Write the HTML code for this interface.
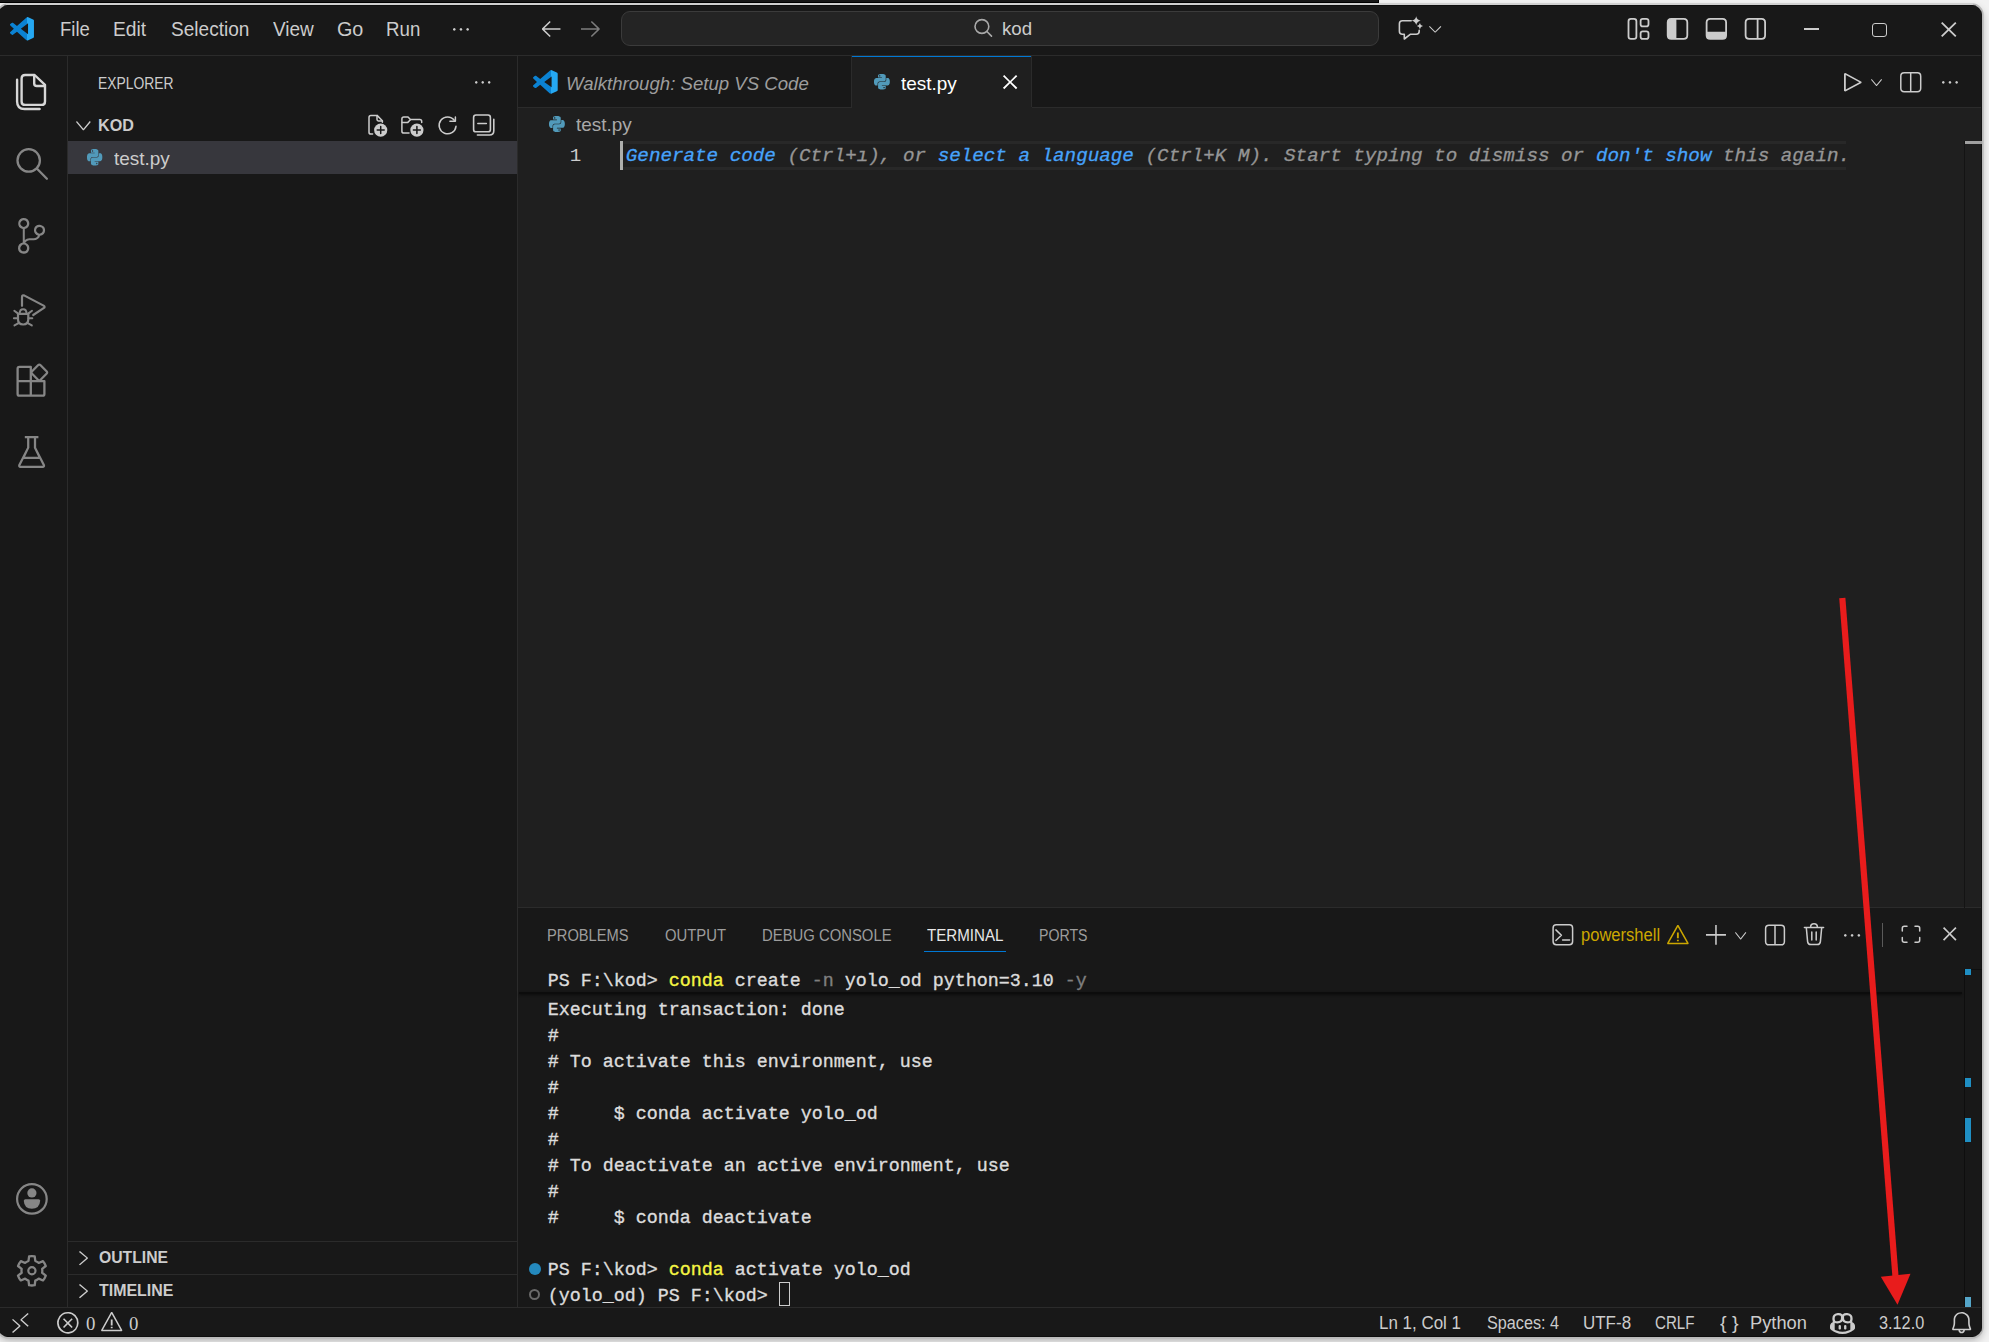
<!DOCTYPE html>
<html><head><meta charset="utf-8"><title>test.py - kod - Visual Studio Code</title>
<style>
html,body{margin:0;padding:0}
body{width:1989px;height:1342px;position:relative;overflow:hidden;background:#f2f2f2;font-family:'Liberation Sans', sans-serif;-webkit-font-smoothing:antialiased}
#win{position:absolute;left:-2px;top:5px;width:1984px;height:1332px;border-radius:10px;overflow:hidden;box-shadow:0 0 0 1.7px #bababa,0 3px 8px 0 rgba(0,0,0,.30)}
#in{position:absolute;left:2px;top:-5px;width:1989px;height:1342px}
</style></head><body>
<div style="position:absolute;left:0;top:0;width:1379px;height:3px;background:#181818;border-bottom:1px solid #000;border-right:1px solid #000;box-sizing:border-box"></div>
<div id="win"><div id="in">
<div style="position:absolute;left:0px;top:0px;width:1989px;height:1342px;background:#181818;"></div>
<div style="position:absolute;left:518px;top:108px;width:1464px;height:800px;background:#1f1f1f;"></div>
<div style="position:absolute;left:0px;top:55px;width:1989px;height:1px;background:#2b2b2b;"></div>
<div style="position:absolute;left:67px;top:56px;width:1px;height:1252px;background:#2b2b2b;"></div>
<div style="position:absolute;left:517px;top:56px;width:1px;height:1252px;background:#2b2b2b;"></div>
<div style="position:absolute;left:518px;top:107px;width:1464px;height:1px;background:#2b2b2b;"></div>
<div style="position:absolute;left:518px;top:907px;width:1464px;height:1px;background:#2b2b2b;"></div>
<div style="position:absolute;left:0px;top:1307px;width:1989px;height:1px;background:#2b2b2b;"></div>
<div style="position:absolute;left:0px;top:1336px;width:1989px;height:1px;background:#0e0e0e;"></div>
<div style="position:absolute;left:1981px;top:5px;width:1px;height:1332px;background:#141414;"></div>
<div style="position:absolute;left:0px;top:5px;width:1989px;height:1px;background:#0e0e0e;"></div>
<svg style="position:absolute;left:0;top:0" width="0" height="0"><defs><linearGradient id="vg" x1="0" x2="1" y1="0" y2="0"><stop offset="0.72" stop-color="#0b82d2"/><stop offset="0.72" stop-color="#25a8f2"/></linearGradient></defs></svg>
<svg style="position:absolute;left:10.00px;top:17.00px;overflow:visible" width="24.00" height="23.50" viewBox="1.0133333333333334 0.9813333333333318 13.013333333333334 13.018666666666668" preserveAspectRatio="none"><path fill="url(#vg)" d="M10.9 13.9Q10.6 14.1 10.2 13.9Q10.1 13.9 9.9 13.8L4.8 9.1L2.6 10.8Q2.5 10.9 2.2 10.9Q2 10.9 1.9 10.7L1.2 10.1Q1 9.9 1 9.7Q1 9.4 1.2 9.3L3.1 7.5L1.2 5.7Q1 5.5 1 5.3Q1 5.1 1.2 4.9L1.9 4.3Q2 4.1 2.2 4.1Q2.5 4.1 2.6 4.2L4.8 5.9L10 1.2Q10.2 1 10.5 1Q10.7 1 10.9 1.1L13.5 2.4Q13.8 2.5 13.9 2.7Q14 2.9 14 3.1V8H10.8V4.5L6.9 7.5L10.8 10.5V8H14V11.9Q14 12.1 13.9 12.3Q13.8 12.5 13.5 12.6Z"/></svg>
<svg style="position:absolute;left:453.00px;top:27.70px;overflow:visible" width="16.00" height="2.80" viewBox="2.026666666666667 6.986666666666666 12.0 2.026666666666667" preserveAspectRatio="none"><path fill="#cccccc" d="M4 8Q4 8.4 3.7 8.7Q3.4 9 3 9Q2.6 9 2.3 8.7Q2 8.4 2 8Q2 7.6 2.3 7.3Q2.6 7 3 7Q3.4 7 3.7 7.3Q4 7.6 4 8ZM9 8Q9 8.4 8.7 8.7Q8.4 9 8 9Q7.6 9 7.3 8.7Q7 8.4 7 8Q7 7.6 7.3 7.3Q7.6 7 8 7Q8.4 7 8.7 7.3Q9 7.6 9 8ZM14 8Q14 8.4 13.7 8.7Q13.4 9 13 9Q12.6 9 12.3 8.7Q12 8.4 12 8Q12 7.6 12.3 7.3Q12.6 7 13 7Q13.4 7 13.7 7.3Q14 7.6 14 8Z"/></svg>
<svg style="position:absolute;left:541.50px;top:21.00px;overflow:visible" width="18.50" height="16.00" viewBox="2.026666666666667 3.0933333333333337 12.0 10.72" preserveAspectRatio="none"><path fill="#cccccc" d="M7 3.1 2 8.1V8.8L7 13.8L7.7 13.1L3.6 9H14V7.9H3.6L7.7 3.8Z"/></svg>
<svg style="position:absolute;left:580.75px;top:21.00px;overflow:visible" width="18.75" height="16.00" viewBox="2.026666666666667 3.1999999999999993 12.0 10.666666666666666" preserveAspectRatio="none"><path fill="#7d7d7d" d="M9 13.9 14 8.9V8.2L9 3.2L8.3 3.9L12.4 8.1H2V9H12.4L8.3 13.2Z"/></svg>
<div style="position:absolute;left:621px;top:11px;width:758px;height:35px;background:#242424;border:1px solid #3b3b3b;border-radius:9px;box-sizing:border-box"></div>
<svg style="position:absolute;left:1428.80px;top:26.00px;overflow:visible" width="12.30" height="6.60" viewBox="2.986666666666667 5.706666666666667 9.973333333333333 5.28" preserveAspectRatio="none"><path fill="#cccccc" d="M8 10.1 12.3 5.7 13 6.3 8.3 11H7.7L3 6.3L3.6 5.7Z"/></svg>
<div style="position:absolute;left:1803.5px;top:28.3px;width:15px;height:1.5px;background:#cccccc;"></div>
<div style="position:absolute;left:1872px;top:22.5px;width:15px;height:14.5px;background:transparent;border:1.8px solid #cccccc;border-radius:3px;box-sizing:border-box"></div>
<svg style="position:absolute;left:1941.00px;top:22.00px;overflow:visible" width="15.50" height="15.00" viewBox="2.56 2.5600000000000005 10.88 10.88" preserveAspectRatio="none"><path fill="#cccccc" d="M7.1 8 2.6 12.5 3.5 13.4 8 8.9 12.5 13.4 13.4 12.5 8.9 8 13.4 3.5 12.5 2.6 8 7.1 3.5 2.6 2.6 3.5Z"/></svg>
<svg style="position:absolute;left:18.40px;top:218.10px;overflow:visible" width="27.20" height="35.80" viewBox="1.9904 0.0 12.036266666666666 16.004444444444445" preserveAspectRatio="none"><path fill="#868686" d="M14 5.5Q14 4.8 13.7 4.2Q13.3 3.6 12.6 3.3Q12 2.9 11.3 3Q10.6 3 10 3.5Q9.4 3.9 9.2 4.6Q9 5.2 9.1 5.9Q9.2 6.6 9.7 7.1Q10.1 7.6 10.8 7.8Q10.6 8.4 10.1 8.7Q9.6 9 9 9H7Q5.9 9 5 9.8V4.9Q6 4.7 6.5 4Q7.1 3.2 7 2.2Q6.9 1.3 6.2 0.6Q5.5 0 4.5 0Q3.6 0 2.9 0.6Q2.1 1.3 2.1 2.2Q2 3.2 2.5 4Q3.1 4.7 4.1 4.9V11Q3.1 11.2 2.5 11.9Q1.9 12.7 2 13.7Q2.1 14.6 2.7 15.3Q3.4 15.9 4.4 16Q5.3 16.1 6.1 15.5Q6.8 14.9 7 13.9Q7.1 13 6.7 12.2Q6.2 11.4 5.2 11.1Q5.5 10.6 6 10.3Q6.5 10 7 10H9Q10 10 10.7 9.4Q11.5 8.9 11.8 7.9Q12.7 7.8 13.4 7.1Q14 6.4 14 5.5ZM3 2.5Q3 1.9 3.5 1.4Q3.9 1 4.5 1Q5.2 1 5.6 1.4Q6 1.9 6 2.5Q6 3.1 5.6 3.5Q5.2 4 4.5 4Q3.9 4 3.5 3.5Q3 3.1 3 2.5ZM6 13.4Q6 14.1 5.6 14.5Q5.2 14.9 4.5 14.9Q3.9 14.9 3.5 14.5Q3 14.1 3 13.5Q3 12.9 3.5 12.4Q3.9 11.9 4.5 11.9Q5.2 11.9 5.6 12.4Q6 12.9 6 13.4ZM11.5 7Q10.9 7 10.5 6.5Q10 6.1 10 5.5Q10 4.9 10.5 4.4Q10.9 4 11.5 4Q12.1 4 12.6 4.4Q13 4.9 13 5.5Q13 6.1 12.6 6.5Q12.1 7 11.5 7Z"/></svg>
<svg style="position:absolute;left:18.40px;top:435.90px;overflow:visible" width="27.20" height="32.10" viewBox="1.9901754385964914 1.0133333333333336 12.003475355054304 13.973333333333333" preserveAspectRatio="none"><path fill="#868686" d="M13.9 13.5 10 6V2H11V1H5V2H6V6L2.1 13.5Q1.9 14.1 2.2 14.5Q2.5 15 3 15H13Q13.5 15 13.8 14.5Q14.1 14.1 13.9 13.5ZM6.9 6.4 7 6.2V2H9V6.2L10.9 10H5.1ZM3 14 4.5 11H11.5L13 14Z"/></svg>
<svg style="position:absolute;left:475.00px;top:80.70px;overflow:visible" width="15.50" height="2.70" viewBox="2.026666666666667 6.986666666666666 12.0 2.026666666666667" preserveAspectRatio="none"><path fill="#cccccc" d="M4 8Q4 8.4 3.7 8.7Q3.4 9 3 9Q2.6 9 2.3 8.7Q2 8.4 2 8Q2 7.6 2.3 7.3Q2.6 7 3 7Q3.4 7 3.7 7.3Q4 7.6 4 8ZM9 8Q9 8.4 8.7 8.7Q8.4 9 8 9Q7.6 9 7.3 8.7Q7 8.4 7 8Q7 7.6 7.3 7.3Q7.6 7 8 7Q8.4 7 8.7 7.3Q9 7.6 9 8ZM14 8Q14 8.4 13.7 8.7Q13.4 9 13 9Q12.6 9 12.3 8.7Q12 8.4 12 8Q12 7.6 12.3 7.3Q12.6 7 13 7Q13.4 7 13.7 7.3Q14 7.6 14 8Z"/></svg>
<svg style="position:absolute;left:75.75px;top:120.75px;overflow:visible" width="14.75" height="9.25" viewBox="2.986666666666667 5.706666666666667 9.973333333333333 5.28" preserveAspectRatio="none"><path fill="#cccccc" d="M8 10.1 12.3 5.7 13 6.3 8.3 11H7.7L3 6.3L3.6 5.7Z"/></svg>
<div style="position:absolute;left:68px;top:141px;width:449px;height:33px;background:#37373d;"></div>
<svg style="position:absolute;left:86.50px;top:149.20px;overflow:visible" width="15.30" height="16.50" viewBox="0 0 24 24" preserveAspectRatio="none"><path fill="#519aba" d="M14.25.18l.9.2.73.26.59.3.45.32.34.34.25.34.16.33.1.3.04.26.02.2-.01.13V8.5l-.05.63-.13.55-.21.46-.26.38-.3.31-.33.25-.35.19-.35.14-.33.1-.3.07-.26.04-.21.02H8.77l-.69.05-.59.14-.5.22-.41.27-.33.32-.27.35-.2.36-.15.37-.1.35-.07.32-.04.27-.02.21v3.06H3.17l-.21-.03-.28-.07-.32-.12-.35-.18-.36-.26-.36-.36-.35-.46-.32-.59-.28-.73-.21-.88-.14-1.05-.05-1.23.06-1.22.16-1.04.24-.87.32-.71.36-.57.4-.44.42-.33.42-.24.4-.16.36-.1.32-.05.24-.01h.16l.06.01h8.16v-.83H6.18l-.01-2.75-.02-.37.05-.34.11-.31.17-.28.25-.26.31-.23.38-.2.44-.18.51-.15.58-.12.64-.1.71-.06.77-.04.84-.02 1.27.05zm-6.3 1.98l-.23.33-.08.41.08.41.23.34.33.22.41.09.41-.09.33-.22.23-.34.08-.41-.08-.41-.23-.33-.33-.22-.41-.09-.41.09zm13.09 3.95l.28.06.32.12.35.18.36.27.36.35.35.47.32.59.28.73.21.88.14 1.04.05 1.23-.06 1.23-.16 1.04-.24.86-.32.71-.36.57-.4.45-.42.33-.42.24-.4.16-.36.09-.32.05-.24.02-.16-.01h-8.22v.82h5.84l.01 2.76.02.36-.05.34-.11.31-.17.29-.25.25-.31.24-.38.2-.44.17-.51.15-.58.13-.64.09-.71.07-.77.04-.84.01-1.27-.04-1.07-.14-.9-.2-.73-.25-.59-.3-.45-.33-.34-.34-.25-.34-.16-.33-.1-.3-.04-.25-.02-.2.01-.13v-5.34l.05-.64.13-.54.21-.46.26-.38.3-.32.33-.24.35-.2.35-.14.33-.1.3-.06.26-.04.21-.02.13-.01h5.84l.69-.05.59-.14.5-.21.41-.28.33-.32.27-.35.2-.36.15-.36.1-.35.07-.32.04-.28.02-.21V6.07h2.09l.14.01zm-6.47 14.25l-.23.33-.08.41.08.41.23.33.33.23.41.08.41-.08.33-.23.23-.33.08-.41-.08-.41-.23-.33-.33-.23-.41-.08-.41.08z"/></svg>
<div style="position:absolute;left:68px;top:1241px;width:449px;height:1px;background:#2b2b2b;"></div>
<svg style="position:absolute;left:79.10px;top:1250.90px;overflow:visible" width="8.90" height="14.30" viewBox="5.706666666666667 3.039999999999999 5.28 9.973333333333333" preserveAspectRatio="none"><path fill="#cccccc" d="M10.1 8 5.7 3.7 6.3 3 11 7.7V8.3L6.3 13L5.7 12.4Z"/></svg>
<div style="position:absolute;left:68px;top:1274px;width:449px;height:1px;background:#2b2b2b;"></div>
<svg style="position:absolute;left:79.10px;top:1283.80px;overflow:visible" width="8.90" height="14.20" viewBox="5.706666666666667 3.039999999999999 5.28 9.973333333333333" preserveAspectRatio="none"><path fill="#cccccc" d="M10.1 8 5.7 3.7 6.3 3 11 7.7V8.3L6.3 13L5.7 12.4Z"/></svg>
<div style="position:absolute;left:851px;top:56px;width:1px;height:51px;background:#2b2b2b;"></div>
<div style="position:absolute;left:852px;top:56px;width:180px;height:52px;background:#1f1f1f;"></div>
<div style="position:absolute;left:852px;top:56px;width:180px;height:1.3px;background:#0078d4;"></div>
<div style="position:absolute;left:1031px;top:56px;width:1px;height:51px;background:#2b2b2b;"></div>
<svg style="position:absolute;left:532.75px;top:70.00px;overflow:visible" width="24.75" height="23.75" viewBox="1.0133333333333334 0.9813333333333318 13.013333333333334 13.018666666666668" preserveAspectRatio="none"><path fill="url(#vg)" d="M10.9 13.9Q10.6 14.1 10.2 13.9Q10.1 13.9 9.9 13.8L4.8 9.1L2.6 10.8Q2.5 10.9 2.2 10.9Q2 10.9 1.9 10.7L1.2 10.1Q1 9.9 1 9.7Q1 9.4 1.2 9.3L3.1 7.5L1.2 5.7Q1 5.5 1 5.3Q1 5.1 1.2 4.9L1.9 4.3Q2 4.1 2.2 4.1Q2.5 4.1 2.6 4.2L4.8 5.9L10 1.2Q10.2 1 10.5 1Q10.7 1 10.9 1.1L13.5 2.4Q13.8 2.5 13.9 2.7Q14 2.9 14 3.1V8H10.8V4.5L6.9 7.5L10.8 10.5V8H14V11.9Q14 12.1 13.9 12.3Q13.8 12.5 13.5 12.6Z"/></svg>
<svg style="position:absolute;left:874.00px;top:73.90px;overflow:visible" width="15.80" height="15.50" viewBox="0 0 24 24" preserveAspectRatio="none"><path fill="#519aba" d="M14.25.18l.9.2.73.26.59.3.45.32.34.34.25.34.16.33.1.3.04.26.02.2-.01.13V8.5l-.05.63-.13.55-.21.46-.26.38-.3.31-.33.25-.35.19-.35.14-.33.1-.3.07-.26.04-.21.02H8.77l-.69.05-.59.14-.5.22-.41.27-.33.32-.27.35-.2.36-.15.37-.1.35-.07.32-.04.27-.02.21v3.06H3.17l-.21-.03-.28-.07-.32-.12-.35-.18-.36-.26-.36-.36-.35-.46-.32-.59-.28-.73-.21-.88-.14-1.05-.05-1.23.06-1.22.16-1.04.24-.87.32-.71.36-.57.4-.44.42-.33.42-.24.4-.16.36-.1.32-.05.24-.01h.16l.06.01h8.16v-.83H6.18l-.01-2.75-.02-.37.05-.34.11-.31.17-.28.25-.26.31-.23.38-.2.44-.18.51-.15.58-.12.64-.1.71-.06.77-.04.84-.02 1.27.05zm-6.3 1.98l-.23.33-.08.41.08.41.23.34.33.22.41.09.41-.09.33-.22.23-.34.08-.41-.08-.41-.23-.33-.33-.22-.41-.09-.41.09zm13.09 3.95l.28.06.32.12.35.18.36.27.36.35.35.47.32.59.28.73.21.88.14 1.04.05 1.23-.06 1.23-.16 1.04-.24.86-.32.71-.36.57-.4.45-.42.33-.42.24-.4.16-.36.09-.32.05-.24.02-.16-.01h-8.22v.82h5.84l.01 2.76.02.36-.05.34-.11.31-.17.29-.25.25-.31.24-.38.2-.44.17-.51.15-.58.13-.64.09-.71.07-.77.04-.84.01-1.27-.04-1.07-.14-.9-.2-.73-.25-.59-.3-.45-.33-.34-.34-.25-.34-.16-.33-.1-.3-.04-.25-.02-.2.01-.13v-5.34l.05-.64.13-.54.21-.46.26-.38.3-.32.33-.24.35-.2.35-.14.33-.1.3-.06.26-.04.21-.02.13-.01h5.84l.69-.05.59-.14.5-.21.41-.28.33-.32.27-.35.2-.36.15-.36.1-.35.07-.32.04-.28.02-.21V6.07h2.09l.14.01zm-6.47 14.25l-.23.33-.08.41.08.41.23.33.33.23.41.08.41-.08.33-.23.23-.33.08-.41-.08-.41-.23-.33-.33-.23-.41-.08-.41.08z"/></svg>
<svg style="position:absolute;left:1003.25px;top:74.90px;overflow:visible" width="14.25" height="14.10" viewBox="3.6266666666666665 3.626666666666667 8.746666666666666 8.746666666666666" preserveAspectRatio="none"><path fill="#ffffff" d="M8 8.7 11.6 12.4 12.4 11.6 8.7 8 12.4 4.4 11.6 3.6 8 7.3 4.4 3.6 3.6 4.4 7.3 8 3.6 11.6 4.4 12.4Z"/></svg>
<svg style="position:absolute;left:1844.00px;top:72.50px;overflow:visible" width="17.50" height="18.50" viewBox="2.986666666666667 1.9733333333333327 9.813333333333333 12.853333333333333" preserveAspectRatio="none"><path fill="#cccccc" d="M3.8 2 3 2.4V14.4L3.8 14.8L12.8 8.9V8ZM4 13.5V3.4L11.6 8.4Z"/></svg>
<svg style="position:absolute;left:1871.00px;top:79.00px;overflow:visible" width="11.00" height="7.00" viewBox="2.986666666666667 5.706666666666667 9.973333333333333 5.28" preserveAspectRatio="none"><path fill="#cccccc" d="M8 10.1 12.3 5.7 13 6.3 8.3 11H7.7L3 6.3L3.6 5.7Z"/></svg>
<svg style="position:absolute;left:1942.00px;top:80.70px;overflow:visible" width="16.00" height="2.70" viewBox="2.026666666666667 6.986666666666666 12.0 2.026666666666667" preserveAspectRatio="none"><path fill="#cccccc" d="M4 8Q4 8.4 3.7 8.7Q3.4 9 3 9Q2.6 9 2.3 8.7Q2 8.4 2 8Q2 7.6 2.3 7.3Q2.6 7 3 7Q3.4 7 3.7 7.3Q4 7.6 4 8ZM9 8Q9 8.4 8.7 8.7Q8.4 9 8 9Q7.6 9 7.3 8.7Q7 8.4 7 8Q7 7.6 7.3 7.3Q7.6 7 8 7Q8.4 7 8.7 7.3Q9 7.6 9 8ZM14 8Q14 8.4 13.7 8.7Q13.4 9 13 9Q12.6 9 12.3 8.7Q12 8.4 12 8Q12 7.6 12.3 7.3Q12.6 7 13 7Q13.4 7 13.7 7.3Q14 7.6 14 8Z"/></svg>
<svg style="position:absolute;left:548.80px;top:116.40px;overflow:visible" width="15.80" height="16.00" viewBox="0 0 24 24" preserveAspectRatio="none"><path fill="#519aba" d="M14.25.18l.9.2.73.26.59.3.45.32.34.34.25.34.16.33.1.3.04.26.02.2-.01.13V8.5l-.05.63-.13.55-.21.46-.26.38-.3.31-.33.25-.35.19-.35.14-.33.1-.3.07-.26.04-.21.02H8.77l-.69.05-.59.14-.5.22-.41.27-.33.32-.27.35-.2.36-.15.37-.1.35-.07.32-.04.27-.02.21v3.06H3.17l-.21-.03-.28-.07-.32-.12-.35-.18-.36-.26-.36-.36-.35-.46-.32-.59-.28-.73-.21-.88-.14-1.05-.05-1.23.06-1.22.16-1.04.24-.87.32-.71.36-.57.4-.44.42-.33.42-.24.4-.16.36-.1.32-.05.24-.01h.16l.06.01h8.16v-.83H6.18l-.01-2.75-.02-.37.05-.34.11-.31.17-.28.25-.26.31-.23.38-.2.44-.18.51-.15.58-.12.64-.1.71-.06.77-.04.84-.02 1.27.05zm-6.3 1.98l-.23.33-.08.41.08.41.23.34.33.22.41.09.41-.09.33-.22.23-.34.08-.41-.08-.41-.23-.33-.33-.22-.41-.09-.41.09zm13.09 3.95l.28.06.32.12.35.18.36.27.36.35.35.47.32.59.28.73.21.88.14 1.04.05 1.23-.06 1.23-.16 1.04-.24.86-.32.71-.36.57-.4.45-.42.33-.42.24-.4.16-.36.09-.32.05-.24.02-.16-.01h-8.22v.82h5.84l.01 2.76.02.36-.05.34-.11.31-.17.29-.25.25-.31.24-.38.2-.44.17-.51.15-.58.13-.64.09-.71.07-.77.04-.84.01-1.27-.04-1.07-.14-.9-.2-.73-.25-.59-.3-.45-.33-.34-.34-.25-.34-.16-.33-.1-.3-.04-.25-.02-.2.01-.13v-5.34l.05-.64.13-.54.21-.46.26-.38.3-.32.33-.24.35-.2.35-.14.33-.1.3-.06.26-.04.21-.02.13-.01h5.84l.69-.05.59-.14.5-.21.41-.28.33-.32.27-.35.2-.36.15-.36.1-.35.07-.32.04-.28.02-.21V6.07h2.09l.14.01zm-6.47 14.25l-.23.33-.08.41.08.41.23.33.33.23.41.08.41-.08.33-.23.23-.33.08-.41-.08-.41-.23-.33-.33-.23-.41-.08-.41.08z"/></svg>
<div style="position:absolute;left:620px;top:141px;width:1225.5px;height:29px;background:transparent;border-top:3px solid #282828;border-bottom:3px solid #282828;box-sizing:border-box"></div>
<div style="position:absolute;left:620px;top:141px;width:3px;height:29px;background:#aeafad;"></div>
<div style="position:absolute;left:1964px;top:141px;width:1px;height:767px;background:#141414;"></div>
<div style="position:absolute;left:1965px;top:141.3px;width:17px;height:3px;background:#a0a0a0;"></div>
<div style="position:absolute;left:924px;top:950.5px;width:82px;height:1.5px;background:#0078d4;"></div>
<svg style="position:absolute;left:1666.75px;top:924.50px;overflow:visible" width="21.75" height="19.25" viewBox="1.0133333333333334 1.0133333333333336 13.973333333333333 12.96" preserveAspectRatio="none"><path fill="#cca700" d="M7.6 1H8.4L15 13.3L14.6 14H1.4L1 13.3ZM8 2.3 2.3 13H13.7ZM8.6 12V11H7.4V12ZM7.4 10V6H8.6V10Z"/></svg>
<svg style="position:absolute;left:1705.50px;top:924.50px;overflow:visible" width="20.00" height="19.75" viewBox="1.0133333333333334 1.0133333333333336 13.013333333333334 12.96" preserveAspectRatio="none"><path fill="#cccccc" d="M14 7V8H8V14H7V8H1V7H7V1H8V7Z"/></svg>
<svg style="position:absolute;left:1734.75px;top:932.00px;overflow:visible" width="11.25" height="7.50" viewBox="2.986666666666667 5.706666666666667 9.973333333333333 5.28" preserveAspectRatio="none"><path fill="#cccccc" d="M8 10.1 12.3 5.7 13 6.3 8.3 11H7.7L3 6.3L3.6 5.7Z"/></svg>
<svg style="position:absolute;left:1844.25px;top:933.70px;overflow:visible" width="16.25" height="2.70" viewBox="2.026666666666667 6.986666666666666 12.0 2.026666666666667" preserveAspectRatio="none"><path fill="#cccccc" d="M4 8Q4 8.4 3.7 8.7Q3.4 9 3 9Q2.6 9 2.3 8.7Q2 8.4 2 8Q2 7.6 2.3 7.3Q2.6 7 3 7Q3.4 7 3.7 7.3Q4 7.6 4 8ZM9 8Q9 8.4 8.7 8.7Q8.4 9 8 9Q7.6 9 7.3 8.7Q7 8.4 7 8Q7 7.6 7.3 7.3Q7.6 7 8 7Q8.4 7 8.7 7.3Q9 7.6 9 8ZM14 8Q14 8.4 13.7 8.7Q13.4 9 13 9Q12.6 9 12.3 8.7Q12 8.4 12 8Q12 7.6 12.3 7.3Q12.6 7 13 7Q13.4 7 13.7 7.3Q14 7.6 14 8Z"/></svg>
<div style="position:absolute;left:1881.5px;top:923px;width:1px;height:24px;background:#5a5a5a;"></div>
<svg style="position:absolute;left:1943.00px;top:927.00px;overflow:visible" width="13.50" height="13.75" viewBox="3.6266666666666665 3.626666666666667 8.746666666666666 8.746666666666666" preserveAspectRatio="none"><path fill="#cccccc" d="M8 8.7 11.6 12.4 12.4 11.6 8.7 8 12.4 4.4 11.6 3.6 8 7.3 4.4 3.6 3.6 4.4 7.3 8 3.6 11.6 4.4 12.4Z"/></svg>
<div style="position:absolute;left:519px;top:992px;width:1443px;height:1.5px;background:#0c0c0c;box-shadow:0 1px 3px rgba(0,0,0,.6)"></div>
<div style="position:absolute;left:1964px;top:969px;width:1px;height:338px;background:#0e0e0e;"></div>
<div style="position:absolute;left:1964px;top:968.5px;width:18px;height:1px;background:#0e0e0e;"></div>
<div style="position:absolute;left:1964.5px;top:968.75px;width:6px;height:5.75px;background:#1f8fc4;"></div>
<div style="position:absolute;left:1964.5px;top:1077.5px;width:6px;height:9.5px;background:#1f8fc4;"></div>
<div style="position:absolute;left:1964.5px;top:1118.25px;width:6px;height:23.5px;background:#1f8fc4;"></div>
<div style="position:absolute;left:1965px;top:1297px;width:6.3px;height:10px;background:#55a6c9;"></div>
<div style="position:absolute;left:528.6px;top:1262.6px;width:12.3px;height:12.3px;border-radius:50%;background:#2489bd"></div>
<div style="position:absolute;left:529.2px;top:1288.6px;width:11px;height:11px;border-radius:50%;border:2px solid #6a6a6a;box-sizing:border-box"></div>
<div style="position:absolute;left:779.3px;top:1282.3px;width:10.4px;height:23.5px;background:transparent;border:1px solid #cccccc;box-sizing:border-box"></div>
<svg style="position:absolute;left:11.70px;top:1313.00px;overflow:visible" width="16.70" height="20.00" viewBox="2.986666666666667 1.0133333333333336 9.92 13.386666666666667" preserveAspectRatio="none"><path fill="#cccccc" d="M12.9 9.5 8.9 5.6 12.9 1.6 12.3 1 8 5.3V5.9L12.3 10.2ZM3 5.6 7.1 9.7 3 13.8 3.6 14.4 8 10V9.4L3.6 5Z"/></svg>
<svg style="position:absolute;left:57.10px;top:1312.20px;overflow:visible" width="21.70" height="21.60" viewBox="0.9725490196078431 0.9866666666666664 13.854117647058823 14.032688172043011" preserveAspectRatio="none"><path fill="#cccccc" d="M8.6 1Q9.8 1.1 10.9 1.6Q11.9 2.1 12.8 3Q14.8 5.2 14.8 8.1Q14.8 10.4 13.2 12.5Q12.4 13.4 11.4 14.1Q10.4 14.7 9.2 14.9Q6.7 15.4 4.6 14.2Q3.5 13.6 2.7 12.7Q1.9 11.8 1.5 10.7Q1.1 9.5 1 8.3Q0.9 7.1 1.3 6Q2.1 3.5 4.1 2.2Q5.1 1.5 6.2 1.2Q7.4 0.9 8.6 1ZM9.1 13.9Q11.1 13.4 12.5 11.8Q13.8 10 13.7 8Q13.7 6.8 13.3 5.7Q12.8 4.5 12 3.7Q10.5 2.1 8.4 2Q7.4 1.9 6.4 2.2Q5.4 2.4 4.6 3Q2.9 4.3 2.3 6.3Q1.7 8.4 2.5 10.3Q3.4 12.3 5.2 13.3Q6.1 13.8 7.1 14Q8.1 14.1 9.1 13.9ZM7.9 7.5 10.3 5 11 5.7 8.6 8.2 11 10.7 10.3 11.4 7.9 8.9 5.5 11.4 4.8 10.7 7.2 8.2 4.8 5.7 5.5 5Z"/></svg>
<svg style="position:absolute;left:100.90px;top:1312.40px;overflow:visible" width="21.40" height="19.30" viewBox="1.0133333333333334 1.0133333333333336 13.973333333333333 12.96" preserveAspectRatio="none"><path fill="#cccccc" d="M7.6 1H8.4L15 13.3L14.6 14H1.4L1 13.3ZM8 2.3 2.3 13H13.7ZM8.6 12V11H7.4V12ZM7.4 10V6H8.6V10Z"/></svg>
<svg style="position:absolute;left:1830.30px;top:1312.70px;overflow:visible" width="25.00" height="21.00" viewBox="0.0 1.9711111111111101 16.0 14.02888888888889" preserveAspectRatio="none"><path fill="#cccccc" d="M6.2 10Q6.6 10 6.8 10.2Q7 10.5 7 10.8V12.3Q7 12.6 6.8 12.8Q6.6 13 6.2 13Q5.9 13 5.7 12.8Q5.5 12.6 5.5 12.3V10.8Q5.5 10.5 5.7 10.2Q5.9 10 6.2 10ZM10.5 10.8Q10.5 10.5 10.3 10.2Q10.1 10 9.8 10Q9.4 10 9.2 10.2Q9 10.5 9 10.8V12.3Q9 12.6 9.2 12.8Q9.4 13 9.8 13Q10.1 13 10.3 12.8Q10.5 12.6 10.5 12.3ZM7.8 2.8Q7.9 2.8 8 2.9L8.2 2.8Q9.1 1.8 11.1 2Q13 2.2 13.8 3.3Q14.5 4.2 14.5 5.8Q14.5 6.8 14.2 7.4L14.4 8.3H14.5Q15.2 8.6 15.6 9.3Q16 10 16 10.7V12Q16 12.3 15.8 12.6Q15.7 12.7 15.5 13Q15.4 13.2 15 13.5L14.4 13.9Q14.1 14.2 13.7 14.4Q13.1 14.8 12.4 15Q10.2 16 8 16Q5.8 16 3.6 15Q2.9 14.8 2.3 14.4Q1.9 14.2 1.6 13.9L1 13.5Q0.6 13.2 0.5 13Q0.3 12.7 0.2 12.6Q0 12.3 0 12V10.7Q0 10 0.4 9.3Q0.8 8.6 1.5 8.3H1.6L1.8 7.4Q1.5 6.8 1.5 5.8Q1.5 4.2 2.2 3.3Q3 2.2 4.9 2Q6.9 1.8 7.8 2.8ZM3 8.7 3 8.8V13.1L3 13.1Q3.6 13.4 4.2 13.7Q6.1 14.5 8 14.5Q9.9 14.5 11.8 13.7Q12.4 13.4 13 13.1L13 13.1V8.8L13 8.7Q12.3 9 11.3 9Q9.5 9 8.5 8Q8.2 7.7 8 7.3Q7.8 7.7 7.5 8Q6.5 9 4.7 9Q3.7 9 3 8.7ZM6.8 3.8Q6.3 3.4 5.1 3.5Q3.8 3.6 3.4 4.1Q3 4.6 3 5.7Q3 6.8 3.3 7.1Q3.6 7.5 4.7 7.5Q5.9 7.5 6.4 7Q6.9 6.5 7 5.4Q7.1 4.2 6.8 3.8ZM9.2 3.8Q8.9 4.2 9 5.4Q9.1 6.5 9.6 7Q10.1 7.5 11.3 7.5Q12.4 7.5 12.7 7.1Q13 6.8 13 5.7Q13 4.6 12.6 4.1Q12.2 3.6 10.9 3.5Q9.7 3.4 9.2 3.8Z"/></svg>
<svg style="position:absolute;left:1951.50px;top:1312.40px;overflow:visible" width="19.30" height="21.30" viewBox="2.026666666666667 0.9882352941176453 11.946666666666667 13.998431372549021" preserveAspectRatio="none"><path fill="#cccccc" d="M13.4 10.6Q13 9.4 13 8.2V6.2Q13 5.2 12.7 4.3Q12.4 3.5 11.7 2.7Q11.1 2 10.3 1.6Q9.4 1.1 8.5 1Q7.4 0.9 6.4 1.3Q5.4 1.6 4.6 2.3Q3.8 3 3.4 4Q3 5 3 6V8.2Q3 9.4 2.6 10.6L2 12.3L2.5 13H6Q6 13.8 6.6 14.4Q7.1 15 8 15Q8.8 15 9.4 14.4Q10 13.8 10 13H13.5L14 12.3ZM8.7 13.7Q8.4 14 8 14Q7.6 14 7.3 13.7Q7 13.4 7 13H9Q9 13.4 8.7 13.7ZM3.1 12 3.5 10.9Q4 9.6 4 8.2V6Q4 5.2 4.3 4.4Q4.7 3.6 5.3 3Q5.9 2.5 6.7 2.2Q7.6 1.9 8.4 2Q10 2.2 11 3.4Q11.5 4 11.7 4.7Q12 5.4 12 6.2V8.2Q12 9.6 12.4 10.9L12.8 12Z"/></svg>
<svg style="position:absolute;left:0;top:0" width="1989" height="1342" viewBox="0 0 1989 1342"><path d="M25.1 75H34.6L45 84.8V101.4Q45 104.9 41.5 104.9H25.1Q21.6 104.9 21.6 101.4V78.5Q21.6 75 25.1 75Z" fill="none" stroke="#d7d7d7" stroke-width="2.4" stroke-linecap="round" stroke-linejoin="round" /><path d="M34.2 75.6V83.4Q34.2 86 36.8 86H44.4" fill="none" stroke="#d7d7d7" stroke-width="2.4" stroke-linecap="round" stroke-linejoin="round" /><path d="M17.1 79.8V101.5Q17.1 109 24.6 109H39.6" fill="none" stroke="#d7d7d7" stroke-width="2.4" stroke-linecap="round" stroke-linejoin="round" /><path d="M19.4 366.9H30.8V395.7H19.4Q17.6 395.7 17.6 393.9V368.7Q17.6 366.9 19.4 366.9ZM17.6 381.2H44.4V393.9Q44.4 395.7 42.6 395.7H30.8" fill="none" stroke="#868686" stroke-width="2.3" stroke-linecap="round" stroke-linejoin="round" /><path d="M38 365.3Q39.3 364 40.6 365.3L46.5 371.2Q47.8 372.5 46.5 373.8L40.6 379.7Q39.3 381 38 379.7L32.1 373.8Q30.8 372.5 32.1 371.2Z" fill="none" stroke="#868686" stroke-width="2.3" stroke-linecap="round" stroke-linejoin="round" /><path d="M377.3 115.6H370.9Q369 115.6 369 117.5V132.2Q369 134.1 370.9 134.1H372.6" fill="none" stroke="#cccccc" stroke-width="1.5" stroke-linecap="round" stroke-linejoin="round" /><path d="M377.3 115.6L382.4 120.7V122.2" fill="none" stroke="#cccccc" stroke-width="1.5" stroke-linecap="round" stroke-linejoin="round" /><path d="M377 116V119.6Q377 121 378.4 121H382" fill="none" stroke="#cccccc" stroke-width="1.5" stroke-linecap="round" stroke-linejoin="round" /><circle cx="380.7" cy="130.1" r="6.6" fill="#cccccc"/><path d="M377.2 130.1H384.2M380.7 126.6V133.6" fill="none" stroke="#181818" stroke-width="1.5" stroke-linecap="round" stroke-linejoin="round" /><path d="M409 133.1H403.8Q401.9 133.1 401.9 131.2V118.9Q401.9 117 403.8 117H408L410.4 119.6H419.8Q421.7 119.6 421.7 121.5V122.6" fill="none" stroke="#cccccc" stroke-width="1.5" stroke-linecap="round" stroke-linejoin="round" /><path d="M402.2 122.6H407.6L410.4 119.8" fill="none" stroke="#cccccc" stroke-width="1.5" stroke-linecap="round" stroke-linejoin="round" /><circle cx="416.9" cy="130.1" r="6.6" fill="#cccccc"/><path d="M413.4 130.1H420.4M416.9 126.6V133.6" fill="none" stroke="#181818" stroke-width="1.5" stroke-linecap="round" stroke-linejoin="round" /><path d="M456 126.3A8.45 8.45 0 1 1 454.3 120.2" fill="none" stroke="#cccccc" stroke-width="1.5" stroke-linecap="round" stroke-linejoin="round" /><path d="M455.4 116.9V121.3H449.9" fill="none" stroke="#cccccc" stroke-width="1.5" stroke-linecap="round" stroke-linejoin="round" /><path d="M476 115H488Q490.4 115 490.4 117.4V129.4Q490.4 131.8 488 131.8H476Q473.6 131.8 473.6 129.4V117.4Q473.6 115 476 115Z" fill="none" stroke="#cccccc" stroke-width="1.6" stroke-linecap="round" stroke-linejoin="round" /><path d="M477.8 123.5H486.4" fill="none" stroke="#cccccc" stroke-width="1.5" stroke-linecap="round" stroke-linejoin="round" /><path d="M493.8 119.2V130.8Q493.8 135 489.6 135H477.4" fill="none" stroke="#cccccc" stroke-width="1.6" stroke-linecap="round" stroke-linejoin="round" /><path d="M1902.3 931V928.3Q1902.3 926.3 1904.3 926.3H1907M1915 926.3H1917.7Q1919.7 926.3 1919.7 928.3V931M1919.7 937.5V940.2Q1919.7 942.2 1917.7 942.2H1915M1907 942.2H1904.3Q1902.3 942.2 1902.3 940.2V937.5" fill="none" stroke="#cccccc" stroke-width="1.5" stroke-linecap="round" stroke-linejoin="round" /><circle cx="31.9" cy="1198.9" r="14.8" fill="none" stroke="#868686" stroke-width="2.2"/><circle cx="31.9" cy="1192.9" r="4.6" fill="#868686"/><path d="M25.4 1199.2H38.6Q40.2 1199.2 40.2 1200.8Q39.6 1208.8 31.9 1208.8Q24.2 1208.8 23.8 1200.8Q23.8 1199.2 25.4 1199.2Z" fill="#868686"  /><path d="M28.51 1260.97L29.10 1256.37A14.7 14.7 0 0 1 34.70 1256.37L35.29 1260.97A10.4 10.4 0 0 1 38.72 1262.95L42.99 1261.16A14.7 14.7 0 0 1 45.80 1266.01L42.11 1268.82A10.4 10.4 0 0 1 42.11 1272.78L45.80 1275.59A14.7 14.7 0 0 1 42.99 1280.44L38.72 1278.65A10.4 10.4 0 0 1 35.29 1280.63L34.70 1285.23A14.7 14.7 0 0 1 29.10 1285.23L28.51 1280.63A10.4 10.4 0 0 1 25.08 1278.65L20.81 1280.44A14.7 14.7 0 0 1 18.00 1275.59L21.69 1272.78A10.4 10.4 0 0 1 21.69 1268.82L18.00 1266.01A14.7 14.7 0 0 1 20.81 1261.16L25.08 1262.95A10.4 10.4 0 0 1 28.51 1260.97Z" fill="none" stroke="#868686" stroke-width="2.3" stroke-linecap="round" stroke-linejoin="round" /><circle cx="31.9" cy="1270.8" r="3.6" fill="none" stroke="#868686" stroke-width="2.2"/><path d="M1556.3 924.8H1569.3999999999999Q1572.6 924.8 1572.6 928.0V941.5999999999999Q1572.6 944.8 1569.3999999999999 944.8H1556.3Q1553.1 944.8 1553.1 941.5999999999999V928.0Q1553.1 924.8 1556.3 924.8Z" fill="none" stroke="#cccccc" stroke-width="1.5" stroke-linecap="round" stroke-linejoin="round" /><path d="M1555.9 929.9L1561.4 935.2L1555.9 940.5M1562.6 940H1569.6" fill="none" stroke="#cccccc" stroke-width="1.5" stroke-linecap="round" stroke-linejoin="round" /><path d="M1769.0 925.3H1781.0Q1784.4 925.3 1784.4 928.6999999999999V941.4Q1784.4 944.8 1781.0 944.8H1769.0Q1765.6 944.8 1765.6 941.4V928.6999999999999Q1765.6 925.3 1769.0 925.3ZM1775 925.5V944.6" fill="none" stroke="#cccccc" stroke-width="1.5" stroke-linecap="round" stroke-linejoin="round" /><path d="M1904.2 72.8H1917.3Q1920.7 72.8 1920.7 76.2V88.3Q1920.7 91.7 1917.3 91.7H1904.2Q1900.8 91.7 1900.8 88.3V76.2Q1900.8 72.8 1904.2 72.8ZM1910.7 73V91.5" fill="none" stroke="#cccccc" stroke-width="1.5" stroke-linecap="round" stroke-linejoin="round" /><path d="M1804.4 927.4H1823.6M1810.6 927.2Q1810.6 923.8 1814 923.8Q1817.4 923.8 1817.4 927.2M1806.3 927.6L1807.6 941.6Q1807.9 944.6 1810.9 944.6H1817.1Q1820.1 944.6 1820.4 941.6L1821.7 927.6M1811.8 932V940M1816.2 932V940" fill="none" stroke="#cccccc" stroke-width="1.5" stroke-linecap="round" stroke-linejoin="round" /><circle cx="981.9" cy="26.5" r="6.9" fill="none" stroke="#a8a8a8" stroke-width="1.6"/><path d="M986.9 31.5L991.5 36.1" fill="none" stroke="#a8a8a8" stroke-width="1.6" stroke-linecap="round" stroke-linejoin="round" /><circle cx="28.7" cy="160.4" r="11.2" fill="none" stroke="#868686" stroke-width="2.3"/><path d="M36.8 168.5L46.9 178.8" fill="none" stroke="#868686" stroke-width="2.3" stroke-linecap="round" stroke-linejoin="round" /><path d="M1630.9 18.9H1634.0Q1636.4 18.9 1636.4 21.299999999999997V36.5Q1636.4 38.9 1634.0 38.9H1630.9Q1628.5 38.9 1628.5 36.5V21.299999999999997Q1628.5 18.9 1630.9 18.9Z" fill="none" stroke="#cccccc" stroke-width="1.8" stroke-linecap="round" stroke-linejoin="round" /><path d="M1642.8 18.9H1646.3Q1648.5 18.9 1648.5 21.099999999999998V24.2Q1648.5 26.4 1646.3 26.4H1642.8Q1640.6 26.4 1640.6 24.2V21.099999999999998Q1640.6 18.9 1642.8 18.9Z" fill="none" stroke="#cccccc" stroke-width="1.8" stroke-linecap="round" stroke-linejoin="round" /><path d="M1642.8 31.4H1646.3Q1648.5 31.4 1648.5 33.6V36.699999999999996Q1648.5 38.9 1646.3 38.9H1642.8Q1640.6 38.9 1640.6 36.699999999999996V33.6Q1640.6 31.4 1642.8 31.4Z" fill="none" stroke="#cccccc" stroke-width="1.8" stroke-linecap="round" stroke-linejoin="round" /><path d="M1671.3 18.9H1683.7Q1687.3 18.9 1687.3 22.5V35.3Q1687.3 38.9 1683.7 38.9H1671.3Q1667.7 38.9 1667.7 35.3V22.5Q1667.7 18.9 1671.3 18.9Z" fill="none" stroke="#cccccc" stroke-width="1.8" stroke-linecap="round" stroke-linejoin="round" /><path d="M1676.4 18.9H1671.3Q1667.7 18.9 1667.7 22.5V35.3Q1667.7 38.9 1671.3 38.9H1676.4Z" fill="#cccccc"  /><path d="M1710.1999999999998 18.9H1722.5Q1726.1 18.9 1726.1 22.5V35.3Q1726.1 38.9 1722.5 38.9H1710.1999999999998Q1706.6 38.9 1706.6 35.3V22.5Q1706.6 18.9 1710.1999999999998 18.9Z" fill="none" stroke="#cccccc" stroke-width="1.8" stroke-linecap="round" stroke-linejoin="round" /><path d="M1706.6 31.7H1726.1V35.3Q1726.1 38.9 1722.5 38.9H1710.2Q1706.6 38.9 1706.6 35.3Z" fill="#cccccc"  /><path d="M1749.1999999999998 18.9H1761.5Q1765.1 18.9 1765.1 22.5V35.3Q1765.1 38.9 1761.5 38.9H1749.1999999999998Q1745.6 38.9 1745.6 35.3V22.5Q1745.6 18.9 1749.1999999999998 18.9ZM1757.6 19V38.8" fill="none" stroke="#cccccc" stroke-width="1.8" stroke-linecap="round" stroke-linejoin="round" /><path d="M22 305.8V297.3Q22 294.6 24.5 295.6L43.6 305.6Q45.6 306.9 43.6 308.2L33.2 315" fill="none" stroke="#868686" stroke-width="2.2" stroke-linecap="round" stroke-linejoin="round" /><path d="M18 313.9H28.3V319.3Q28.3 324.5 23.15 324.5Q18 324.5 18 319.3Z" fill="none" stroke="#868686" stroke-width="2.2" stroke-linecap="round" stroke-linejoin="round" /><path d="M19.7 313.5Q19.7 309.2 23.1 309.2Q26.5 309.2 26.5 313.5" fill="none" stroke="#868686" stroke-width="2" stroke-linecap="round" stroke-linejoin="round" /><path d="M17.8 313.4L14.3 310.8M28.5 313.4L32 310.8M17.8 318.2H13.9M28.5 318.2H32.3M19 322.9L14.5 325.4M27.3 322.9L31.8 325.4" fill="none" stroke="#868686" stroke-width="2" stroke-linecap="round" stroke-linejoin="round" /><path d="M1411.2 20.8H1402.4Q1399.4 20.8 1399.4 23.8V31.3Q1399.4 34.3 1402.4 34.3H1404.3V39L1410.2 34.3H1416.2Q1419.2 34.3 1419.2 31.3V30.4" fill="none" stroke="#cccccc" stroke-width="1.6" stroke-linecap="round" stroke-linejoin="round" /><path d="M1416.2 16.299999999999997Q1416.904 19.996 1420.6000000000001 20.7Q1416.904 21.404 1416.2 25.1Q1415.496 21.404 1411.8 20.7Q1415.496 19.996 1416.2 16.299999999999997Z" fill="#cccccc"  /><path d="M1419.9 23.0Q1420.3960000000002 25.604000000000003 1423.0 26.1Q1420.3960000000002 26.596 1419.9 29.200000000000003Q1419.404 26.596 1416.8000000000002 26.1Q1419.404 25.604000000000003 1419.9 23.0Z" fill="#cccccc"  /></svg>
<svg style="position:absolute;left:0;top:0" width="1989" height="1342" viewBox="0 0 1989 1342"><line x1="1842.3" y1="598" x2="1895.6" y2="1278" stroke="#e81c1c" stroke-width="6.2"/><polygon points="1880.8,1276.7 1910.5,1273.8 1897.5,1304.8" fill="#e81c1c"/></svg>
<span style="position:absolute;left:60.10px;top:18.85px;font:normal 400 20.5px/1 'Liberation Sans', sans-serif;color:#cccccc;white-space:pre;transform-origin:0 0;transform:scaleX(0.9010)">File</span>
<span style="position:absolute;left:113.06px;top:18.85px;font:normal 400 20.5px/1 'Liberation Sans', sans-serif;color:#cccccc;white-space:pre;transform-origin:0 0;transform:scaleX(0.9385)">Edit</span>
<span style="position:absolute;left:171.00px;top:18.85px;font:normal 400 20.5px/1 'Liberation Sans', sans-serif;color:#cccccc;white-space:pre;transform-origin:0 0;transform:scaleX(0.9293)">Selection</span>
<span style="position:absolute;left:273.00px;top:18.85px;font:normal 400 20.5px/1 'Liberation Sans', sans-serif;color:#cccccc;white-space:pre;transform-origin:0 0;transform:scaleX(0.9264)">View</span>
<span style="position:absolute;left:337.04px;top:18.85px;font:normal 400 20.5px/1 'Liberation Sans', sans-serif;color:#cccccc;white-space:pre;transform-origin:0 0;transform:scaleX(0.9636)">Go</span>
<span style="position:absolute;left:386.09px;top:18.85px;font:normal 400 20.5px/1 'Liberation Sans', sans-serif;color:#cccccc;white-space:pre;transform-origin:0 0;transform:scaleX(0.9115)">Run</span>
<span style="position:absolute;left:1001.72px;top:18.82px;font:normal 400 19px/1 'Liberation Sans', sans-serif;color:#cccccc;white-space:pre;transform-origin:0 0;transform:scaleX(0.9839)">kod</span>
<span style="position:absolute;left:97.88px;top:76.06px;font:normal 400 16px/1 'Liberation Sans', sans-serif;color:#cccccc;white-space:pre;transform-origin:0 0;transform:scaleX(0.8675)">EXPLORER</span>
<span style="position:absolute;left:97.74px;top:117.86px;font:normal 700 16px/1 'Liberation Sans', sans-serif;color:#cccccc;white-space:pre;transform-origin:0 0;transform:scaleX(1.0074)">KOD</span>
<span style="position:absolute;left:113.80px;top:148.82px;font:normal 400 19px/1 'Liberation Sans', sans-serif;color:#cccccc;white-space:pre;transform-origin:0 0;transform:scaleX(0.9970)">test.py</span>
<span style="position:absolute;left:98.60px;top:1250.16px;font:normal 700 16px/1 'Liberation Sans', sans-serif;color:#cccccc;white-space:pre;transform-origin:0 0;transform:scaleX(0.9823)">OUTLINE</span>
<span style="position:absolute;left:98.60px;top:1283.06px;font:normal 700 16px/1 'Liberation Sans', sans-serif;color:#cccccc;white-space:pre;transform-origin:0 0;transform:scaleX(0.9948)">TIMELINE</span>
<span style="position:absolute;left:566.02px;top:73.92px;font:italic 400 19px/1 'Liberation Sans', sans-serif;color:#9d9d9d;white-space:pre;transform-origin:0 0;transform:scaleX(0.9795)">Walkthrough: Setup VS Code</span>
<span style="position:absolute;left:901.25px;top:73.92px;font:normal 400 19px/1 'Liberation Sans', sans-serif;color:#ffffff;white-space:pre;transform-origin:0 0;transform:scaleX(0.9961)">test.py</span>
<span style="position:absolute;left:575.75px;top:115.12px;font:normal 400 19px/1 'Liberation Sans', sans-serif;color:#a9a9a9;white-space:pre;transform-origin:0 0;transform:scaleX(0.9961)">test.py</span>
<span style="position:absolute;left:547.33px;top:927.71px;font:normal 400 16px/1 'Liberation Sans', sans-serif;color:#9d9d9d;white-space:pre;transform-origin:0 0;transform:scaleX(0.9170)">PROBLEMS</span>
<span style="position:absolute;left:664.50px;top:927.71px;font:normal 400 16px/1 'Liberation Sans', sans-serif;color:#9d9d9d;white-space:pre;transform-origin:0 0;transform:scaleX(0.9280)">OUTPUT</span>
<span style="position:absolute;left:761.82px;top:927.71px;font:normal 400 16px/1 'Liberation Sans', sans-serif;color:#9d9d9d;white-space:pre;transform-origin:0 0;transform:scaleX(0.9281)">DEBUG CONSOLE</span>
<span style="position:absolute;left:927.00px;top:927.71px;font:normal 400 16px/1 'Liberation Sans', sans-serif;color:#e7e7e7;white-space:pre;transform-origin:0 0;transform:scaleX(0.9444)">TERMINAL</span>
<span style="position:absolute;left:1039.37px;top:927.71px;font:normal 400 16px/1 'Liberation Sans', sans-serif;color:#9d9d9d;white-space:pre;transform-origin:0 0;transform:scaleX(0.8842)">PORTS</span>
<span style="position:absolute;left:1580.58px;top:926.01px;font:normal 400 18px/1 'Liberation Sans', sans-serif;color:#cca700;white-space:pre;transform-origin:0 0;transform:scaleX(0.9191)">powershell</span>
<span style="position:absolute;left:85.50px;top:1313.99px;font:normal 400 19px/1 'Liberation Serif', serif;color:#cccccc;white-space:pre;transform-origin:0 0;transform:scaleX(0.9889)">0</span>
<span style="position:absolute;left:128.80px;top:1313.99px;font:normal 400 19px/1 'Liberation Serif', serif;color:#cccccc;white-space:pre;transform-origin:0 0;transform:scaleX(0.9889)">0</span>
<span style="position:absolute;left:1378.63px;top:1314.99px;font:normal 400 17.5px/1 'Liberation Sans', sans-serif;color:#cccccc;white-space:pre;transform-origin:0 0;transform:scaleX(0.9686)">Ln 1, Col 1</span>
<span style="position:absolute;left:1486.50px;top:1314.99px;font:normal 400 17.5px/1 'Liberation Sans', sans-serif;color:#cccccc;white-space:pre;transform-origin:0 0;transform:scaleX(0.9258)">Spaces: 4</span>
<span style="position:absolute;left:1582.73px;top:1314.99px;font:normal 400 17.5px/1 'Liberation Sans', sans-serif;color:#cccccc;white-space:pre;transform-origin:0 0;transform:scaleX(0.9698)">UTF-8</span>
<span style="position:absolute;left:1654.60px;top:1314.99px;font:normal 400 17.5px/1 'Liberation Sans', sans-serif;color:#cccccc;white-space:pre;transform-origin:0 0;transform:scaleX(0.8643)">CRLF</span>
<span style="position:absolute;left:1720.10px;top:1314.99px;font:normal 400 17.5px/1 'Liberation Sans', sans-serif;color:#cccccc;white-space:pre;transform-origin:0 0;transform:scaleX(1.1313)">{ }</span>
<span style="position:absolute;left:1750.16px;top:1314.99px;font:normal 400 17.5px/1 'Liberation Sans', sans-serif;color:#cccccc;white-space:pre;transform-origin:0 0;transform:scaleX(1.0446)">Python</span>
<span style="position:absolute;left:1878.90px;top:1314.99px;font:normal 400 17.5px/1 'Liberation Sans', sans-serif;color:#cccccc;white-space:pre;transform-origin:0 0;transform:scaleX(0.9300)">3.12.0</span>
<span style="position:absolute;left:569.75px;top:147.04px;font:normal 400 19.247px/1 'Liberation Mono', monospace;color:#cccccc;white-space:pre">1</span>
<span style="position:absolute;left:625.80px;top:147.24px;font:italic 400 19.247px/1 'Liberation Mono', monospace;color:#47a3fb;white-space:pre;-webkit-text-stroke:0.3px">Generate code</span>
<span style="position:absolute;left:775.95px;top:147.24px;font:italic 400 19.247px/1 'Liberation Mono', monospace;color:#969696;white-space:pre;-webkit-text-stroke:0.3px"> (Ctrl+ı), or </span>
<span style="position:absolute;left:937.65px;top:147.24px;font:italic 400 19.247px/1 'Liberation Mono', monospace;color:#47a3fb;white-space:pre;-webkit-text-stroke:0.3px">select a language</span>
<span style="position:absolute;left:1134.00px;top:147.24px;font:italic 400 19.247px/1 'Liberation Mono', monospace;color:#969696;white-space:pre;-webkit-text-stroke:0.3px"> (Ctrl+K M). Start typing to dismiss or </span>
<span style="position:absolute;left:1596.00px;top:147.24px;font:italic 400 19.247px/1 'Liberation Mono', monospace;color:#47a3fb;white-space:pre;-webkit-text-stroke:0.3px">don&#x27;t show</span>
<span style="position:absolute;left:1711.50px;top:147.24px;font:italic 400 19.247px/1 'Liberation Mono', monospace;color:#969696;white-space:pre;-webkit-text-stroke:0.3px"> this again.</span>
<span style="position:absolute;left:547.80px;top:972.95px;font:normal 400 18.330px/1 'Liberation Mono', monospace;color:#dcdcdc;white-space:pre;-webkit-text-stroke:0.35px">PS F:\kod&gt; </span>
<span style="position:absolute;left:668.80px;top:972.95px;font:normal 400 18.330px/1 'Liberation Mono', monospace;color:#f5f543;white-space:pre;-webkit-text-stroke:0.35px">conda</span>
<span style="position:absolute;left:723.80px;top:972.95px;font:normal 400 18.330px/1 'Liberation Mono', monospace;color:#dcdcdc;white-space:pre;-webkit-text-stroke:0.35px"> create </span>
<span style="position:absolute;left:811.80px;top:972.95px;font:normal 400 18.330px/1 'Liberation Mono', monospace;color:#7f7f7f;white-space:pre;-webkit-text-stroke:0.35px">-n</span>
<span style="position:absolute;left:833.80px;top:972.95px;font:normal 400 18.330px/1 'Liberation Mono', monospace;color:#dcdcdc;white-space:pre;-webkit-text-stroke:0.35px"> yolo_od python=3.10 </span>
<span style="position:absolute;left:1064.80px;top:972.95px;font:normal 400 18.330px/1 'Liberation Mono', monospace;color:#7f7f7f;white-space:pre;-webkit-text-stroke:0.35px">-y</span>
<span style="position:absolute;left:547.80px;top:1002.20px;font:normal 400 18.330px/1 'Liberation Mono', monospace;color:#dcdcdc;white-space:pre;-webkit-text-stroke:0.35px">Executing transaction: done</span>
<span style="position:absolute;left:547.80px;top:1028.35px;font:normal 400 18.330px/1 'Liberation Mono', monospace;color:#dcdcdc;white-space:pre;-webkit-text-stroke:0.35px">#</span>
<span style="position:absolute;left:547.80px;top:1054.25px;font:normal 400 18.330px/1 'Liberation Mono', monospace;color:#dcdcdc;white-space:pre;-webkit-text-stroke:0.35px"># To activate this environment, use</span>
<span style="position:absolute;left:547.80px;top:1080.25px;font:normal 400 18.330px/1 'Liberation Mono', monospace;color:#dcdcdc;white-space:pre;-webkit-text-stroke:0.35px">#</span>
<span style="position:absolute;left:547.80px;top:1106.25px;font:normal 400 18.330px/1 'Liberation Mono', monospace;color:#dcdcdc;white-space:pre;-webkit-text-stroke:0.35px">#     $ conda activate yolo_od</span>
<span style="position:absolute;left:547.80px;top:1132.25px;font:normal 400 18.330px/1 'Liberation Mono', monospace;color:#dcdcdc;white-space:pre;-webkit-text-stroke:0.35px">#</span>
<span style="position:absolute;left:547.80px;top:1158.25px;font:normal 400 18.330px/1 'Liberation Mono', monospace;color:#dcdcdc;white-space:pre;-webkit-text-stroke:0.35px"># To deactivate an active environment, use</span>
<span style="position:absolute;left:547.80px;top:1184.25px;font:normal 400 18.330px/1 'Liberation Mono', monospace;color:#dcdcdc;white-space:pre;-webkit-text-stroke:0.35px">#</span>
<span style="position:absolute;left:547.80px;top:1210.25px;font:normal 400 18.330px/1 'Liberation Mono', monospace;color:#dcdcdc;white-space:pre;-webkit-text-stroke:0.35px">#     $ conda deactivate</span>
<span style="position:absolute;left:547.80px;top:1262.25px;font:normal 400 18.330px/1 'Liberation Mono', monospace;color:#dcdcdc;white-space:pre;-webkit-text-stroke:0.35px">PS F:\kod&gt; </span>
<span style="position:absolute;left:668.80px;top:1262.25px;font:normal 400 18.330px/1 'Liberation Mono', monospace;color:#f5f543;white-space:pre;-webkit-text-stroke:0.35px">conda</span>
<span style="position:absolute;left:723.80px;top:1262.25px;font:normal 400 18.330px/1 'Liberation Mono', monospace;color:#dcdcdc;white-space:pre;-webkit-text-stroke:0.35px"> activate yolo_od</span>
<span style="position:absolute;left:547.80px;top:1288.25px;font:normal 400 18.330px/1 'Liberation Mono', monospace;color:#dcdcdc;white-space:pre;-webkit-text-stroke:0.35px">(yolo_od) PS F:\kod&gt; </span>
</div></div>
<div style="position:absolute;left:6px;top:3px;width:1967px;height:2px;background:#d0d0d0"></div>
</body></html>
